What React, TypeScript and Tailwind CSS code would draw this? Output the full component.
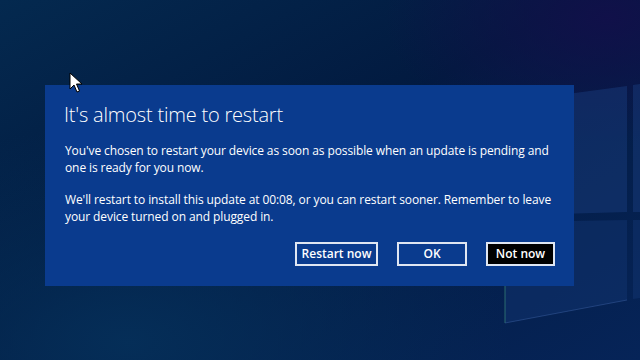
import React from "react";

function Backdrop() {
  return (
    <svg className="absolute inset-0" width="640" height="360" viewBox="0 0 640 360">
      <defs>
        <linearGradient id="bg" x1="0" y1="0" x2="1" y2="1">
          <stop offset="0" stopColor="#04294f" />
          <stop offset="0.45" stopColor="#021a40" />
          <stop offset="1" stopColor="#062458" />
        </linearGradient>
        <radialGradient id="glow" cx="0.2" cy="0.95" r="0.6">
          <stop offset="0" stopColor="#05305a" stopOpacity="0.9" />
          <stop offset="1" stopColor="#05305a" stopOpacity="0" />
        </radialGradient>
        <radialGradient id="tr" cx="0.95" cy="0.05" r="0.35">
          <stop offset="0" stopColor="#120f4a" stopOpacity="0.9" />
          <stop offset="1" stopColor="#120f4a" stopOpacity="0" />
        </radialGradient>
      </defs>
      <rect width="640" height="360" fill="url(#bg)" />
      <rect width="640" height="360" fill="url(#glow)" />
      <rect width="640" height="360" fill="url(#tr)" />
      {/* windows logo panes */}
      <polygon points="560,95 627,86 627,212 560,214" fill="#1a3d80" opacity="0.45" />
      <polygon points="633,85 640,84 640,212 633,212" fill="#1a3d80" opacity="0.45" />
      <polygon points="505,222 627,220 627,300 505,323" fill="#12346f" opacity="0.5" />
      <polygon points="633,220 640,220 640,298 633,299" fill="#12346f" opacity="0.5" />
      <line x1="505" y1="286" x2="505" y2="323" stroke="#3a8a7a" strokeWidth="1" opacity="0.7" />
      <line x1="505" y1="323" x2="627" y2="300" stroke="#3b5fa0" strokeWidth="1" opacity="0.5" />
    </svg>
  );
}

function Cursor() {
  return (
    <svg className="absolute left-[69px] top-[72px]" width="16" height="22" viewBox="0 0 16 22">
      <path d="M1 1 L1 17 L5 13 L8 20 L10.5 19 L7.5 12 L13 12 Z" fill="#ffffff" stroke="#000000" strokeWidth="1" />
    </svg>
  );
}

export default function App() {
  return (
    <div
      className="relative w-[640px] h-[360px] overflow-hidden bg-[#031f46]"
      style={{ fontFamily: '"Open Sans", "Noto Sans", sans-serif' }}
    >
      <Backdrop />
      <div className="relative pt-[85px] pl-[45px]">
        <div className="w-[529px] h-[201px] bg-[#0a3b8e] pt-[16px] pl-[19px] pr-[19px] flex flex-col">
          <h1 className="text-[20px] leading-[28px] font-light text-white tracking-[-0.2px]">
            It's almost time to restart
          </h1>
          <p className="mt-[13px] text-[12px] leading-[17px] text-white tracking-[-0.1px] pl-[1px]">
            You've chosen to restart your device as soon as possible when an update is pending and one is ready for you now.
          </p>
          <p className="mt-[15px] text-[12px] leading-[17px] text-white tracking-[-0.1px] pl-[1px]">
            We'll restart to install this update at 00:08, or you can restart sooner. Remember to leave your device turned on and plugged in.
          </p>
          <div className="mt-auto mb-[20px] flex justify-end gap-[19px]">
            <button className="w-[83px] h-[24px] border-2 border-[#dfe6f2] bg-[#0a3b8e] text-white text-[12px] font-semibold">
              Restart now
            </button>
            <button className="w-[70px] h-[24px] border-2 border-[#dfe6f2] bg-[#0a3b8e] text-white text-[12px] font-semibold">
              OK
            </button>
            <button className="w-[69px] h-[24px] border-2 border-[#dfe6f2] bg-black text-white text-[12px] font-semibold">
              Not now
            </button>
          </div>
        </div>
      </div>
      <Cursor />
    </div>
  );
}
